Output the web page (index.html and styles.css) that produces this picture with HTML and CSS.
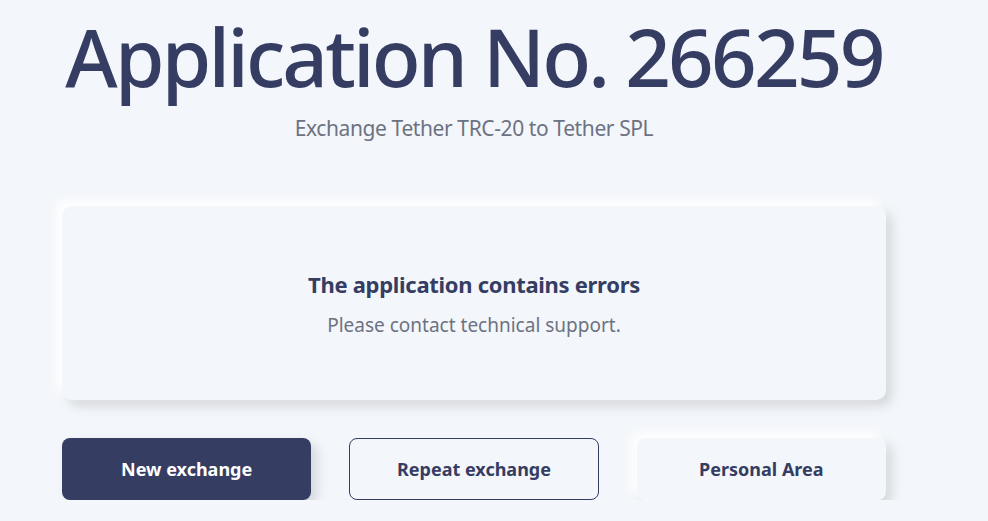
FILE: index.html
```html
<!DOCTYPE html>
<html lang="en">
<head>
    <meta charset="UTF-8">
    <meta name="viewport" content="width=device-width, initial-scale=1.0">
    <title>Application No. 266259</title>
    <link rel="stylesheet" href="styles.css">
</head>
<body>
    <main class="page">
        <!-- Cabeçalho da aplicação -->
        <header class="app-head">
            <h1>Application No. 266259</h1>
            <p class="app-sub">Exchange Tether TRC-20 to Tether SPL</p>
        </header>

        <!-- Estado da aplicação -->
        <section class="status-card">
            <h2>The application contains errors</h2>
            <p>Please contact technical support.</p>
        </section>

        <!-- Ações -->
        <div class="actions">
            <button type="button" class="btn btn-dark">New exchange</button>
            <button type="button" class="btn btn-outline">Repeat exchange</button>
            <button type="button" class="btn btn-soft">Personal Area</button>
        </div>
    </main>
</body>
</html>
```

FILE: styles.css
```css
body {
    font-family: "Noto Sans", "Open Sans", sans-serif;
    margin: 0;
    padding: 0;
    background-color: #f3f6fa;
    color: #363d63;
}
.page {
    width: 824px;
    margin-left: 62px;
    padding-top: 11px;
}
.app-head {
    text-align: center;
}
.app-head h1 {
    margin: 0;
    font-size: 80px;
    font-weight: 500;
    line-height: 90px;
    letter-spacing: -2.85px;
    white-space: nowrap;
}
.app-sub {
    margin: 13px 0 0;
    font-size: 21px;
    line-height: 28px;
    letter-spacing: -0.4px;
    color: #6d7282;
}
.status-card {
    margin-top: 64px;
    height: 194px;
    border-radius: 10px;
    background: #f3f6fa;
    box-shadow: -6px -6px 12px #ffffff, 6px 6px 12px rgba(0, 0, 0, 0.13);
    display: flex;
    flex-direction: column;
    justify-content: center;
    align-items: center;
    text-align: center;
}
.status-card h2 {
    margin: 0;
    font-size: 22px;
    line-height: 30px;
    letter-spacing: -0.3px;
    font-weight: 700;
}
.status-card p {
    margin: 13px 0 0;
    font-size: 19px;
    line-height: 26px;
    color: #6d7282;
}
.actions {
    margin-top: 38px;
    display: grid;
    grid-template-columns: repeat(3, 1fr);
    gap: 38px;
}
.btn {
    height: 62px;
    border-radius: 8px;
    font-family: "Noto Sans", sans-serif;
    font-size: 18px;
    font-weight: 700;
    cursor: pointer;
    color: #363d63;
    background: #f3f6fa;
    border: 1px solid transparent;
}
.btn-dark {
    background: #363d63;
    color: white;
    box-shadow: 6px 6px 12px rgba(0, 0, 0, 0.13);
}
.btn-outline {
    border-color: #363d63;
}
.btn-soft {
    box-shadow: -6px -6px 12px #ffffff, 6px 6px 12px rgba(0, 0, 0, 0.13);
}
```
